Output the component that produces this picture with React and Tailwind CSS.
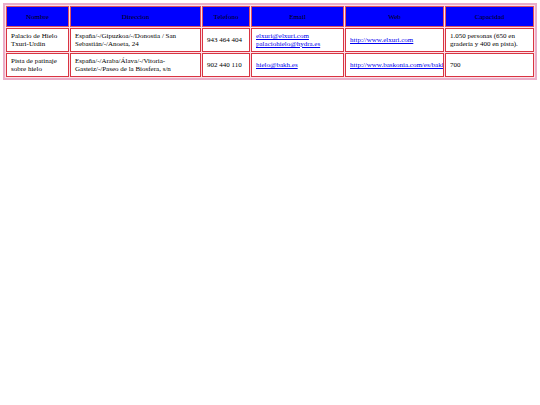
export default function App() {
  const cell =
    "border border-[#d93442] bg-white align-middle px-[4px] overflow-hidden whitespace-normal";
  const head =
    "border border-[#e0505e] bg-[#0000ff] text-black font-normal text-center align-middle h-[21px] px-[4px] overflow-hidden";
  const link = "text-[#0000ee] underline";
  return (
    <div className="w-[540px] h-[405px] bg-white pt-[3px] pl-[3px]" style={{ fontFamily: '"Liberation Serif", "Times New Roman", serif' }}>
      <table className="table-fixed border-separate border-spacing-[1px] border-2 border-[#eaadc8] bg-[#fbe1e7] text-[7px] leading-[8px] w-[534px]">
        <colgroup>
          <col className="w-[63px]" />
          <col className="w-[131px]" />
          <col className="w-[48px]" />
          <col className="w-[93px]" />
          <col className="w-[99px]" />
          <col className="w-[89px]" />
        </colgroup>
        <thead>
          <tr>
            <th className={head}>Nombre</th>
            <th className={head}>Direccion</th>
            <th className={head}>Telefono</th>
            <th className={head}>Email</th>
            <th className={head}>Web</th>
            <th className={head}>Capacidad</th>
          </tr>
        </thead>
        <tbody>
          <tr className="h-[24px]">
            <td className={cell}>Palacio de Hielo Txuri-Urdin</td>
            <td className={cell}>España/-/Gipuzkoa/-/Donostia / San Sebastián/-/Anoeta, 24</td>
            <td className={cell}>943 464 404</td>
            <td className={cell}>
              <a className={link}>elxuri@elxuri.com</a>
              <br />
              <a className={link}>palaciohielo@hydra.es</a>
            </td>
            <td className={cell + " whitespace-nowrap"}>
              <a className={link}>http://www.elxuri.com</a>
            </td>
            <td className={cell}>1.050 personas (650 en gradería y 400 en pista).</td>
          </tr>
          <tr className="h-[24px]">
            <td className={cell}>Pista de patinaje sobre hielo</td>
            <td className={cell}>España/-/Araba/Álava/-/Vitoria-Gasteiz/-/Paseo de la Biosfera, s/n</td>
            <td className={cell}>902 440 110</td>
            <td className={cell}>
              <a className={link}>hielo@bakh.es</a>
            </td>
            <td className={cell + " whitespace-nowrap pr-0"}>
              <a className={link}>http://www.baskonia.com/es/bakh</a>
            </td>
            <td className={cell}>700</td>
          </tr>
        </tbody>
      </table>
    </div>
  );
}
